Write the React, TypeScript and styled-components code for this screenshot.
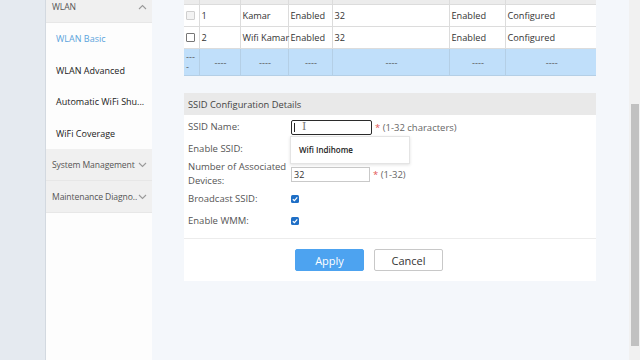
import React from "react";
import styled, { createGlobalStyle } from "styled-components";

const GlobalStyle = createGlobalStyle`
   body {
      margin: 0;
      font-family: "Open Sans", "Noto Sans", sans-serif;
      color: #333;
   }
`;

const Chevron = ({ up }: { up?: boolean }) => (
   <svg width="9" height="6" viewBox="0 0 9 6">
      <path
         d={up ? "M1 5 L4.5 1.5 L8 5" : "M1 1 L4.5 4.5 L8 1"}
         fill="none"
         stroke="#9a9a9a"
         strokeWidth="1.1"
      />
   </svg>
);

const Tick = () => (
   <svg width="8" height="8" viewBox="0 0 8 8">
      <rect width="8" height="8" rx="1.5" fill="#1f6fc6" />
      <path d="M1.8 4.2 L3.4 5.7 L6.3 2.4" fill="none" stroke="#fff" strokeWidth="1.2" />
   </svg>
);

const columns = [15, 41, 48, 44, 117, 56, 91];

const rows = [
   { box: "disabled", cells: ["1", "Kamar", "Enabled", "32", "Enabled", "Configured"] },
   { box: "plain", cells: ["2", "Wifi Kamar", "Enabled", "32", "Enabled", "Configured"] },
];

export default function App() {
   return (
      <>
         <GlobalStyle />
         <Page>
            <LeftStrip />
            <Sidebar>
               <Scroller>
                  <MenuHeader>
                     <span>WLAN</span> <Chevron up />
                  </MenuHeader>
                  <MenuItem active>WLAN Basic</MenuItem>
                  <MenuItem>WLAN Advanced</MenuItem>
                  <MenuItem>Automatic WiFi Shu...</MenuItem>
                  <MenuItem>WiFi Coverage</MenuItem>
                  <MenuHeader>
                     <span>System Management</span> <Chevron />
                  </MenuHeader>
                  <MenuHeader>
                     <span>Maintenance Diagno..</span> <Chevron />
                  </MenuHeader>
               </Scroller>
            </Sidebar>
            <Main>
               <Content>
                  <Table>
                     <colgroup>
                        {columns.map((w, i) => (
                           <col key={i} style={{ width: w }} />
                        ))}
                     </colgroup>
                     <tbody>
                        <HeadRow>
                           {columns.map((_, i) => (
                              <td key={i} />
                           ))}
                        </HeadRow>
                        {rows.map((r, i) => (
                           <tr key={i}>
                              <td>
                                 <Box faded={r.box === "disabled"} />
                              </td>
                              {r.cells.map((c, j) => (
                                 <td key={j}>{c}</td>
                              ))}
                           </tr>
                        ))}
                        <BlankRow>
                           <NarrowCell>----</NarrowCell>
                           {Array.from({ length: 6 }).map((_, j) => (
                              <td key={j}>----</td>
                           ))}
                        </BlankRow>
                     </tbody>
                  </Table>

                  <Panel>
                     <PanelTitle>SSID Configuration Details</PanelTitle>
                     <PanelBody>
                        <FieldRow>
                           <Label>SSID Name:</Label>
                           <Control>
                              <InputWrap>
                                 <TextBox focused>
                                    <Caret />
                                    <Beam>I</Beam>
                                 </TextBox>
                                 <Suggest>Wifi Indihome</Suggest>
                              </InputWrap>
                              <Hint>
                                 <em>*</em> (1-32 characters)
                              </Hint>
                           </Control>
                        </FieldRow>
                        <FieldRow>
                           <Label>Enable SSID:</Label>
                        </FieldRow>
                        <FieldRow tall>
                           <Label>
                              Number of Associated
                              <br />
                              Devices:
                           </Label>
                           <Control>
                              <TextBox width={79}>32</TextBox>
                              <Hint>
                                 <em>*</em> (1-32)
                              </Hint>
                           </Control>
                        </FieldRow>
                        <FieldRow>
                           <Label>Broadcast SSID:</Label>
                           <Control>
                              <Tick />
                           </Control>
                        </FieldRow>
                        <FieldRow>
                           <Label>Enable WMM:</Label>
                           <Control>
                              <Tick />
                           </Control>
                        </FieldRow>
                     </PanelBody>
                     <ButtonBar>
                        <Button primary>Apply</Button>
                        <Button>Cancel</Button>
                     </ButtonBar>
                  </Panel>
               </Content>
            </Main>
            <ScrollTrack>
               <ScrollThumb />
            </ScrollTrack>
         </Page>
      </>
   );
}

const Page = styled.div`
   display: flex;
   width: 640px;
   height: 360px;
   overflow: hidden;
   background: #f4f7fb;
`;

const LeftStrip = styled.div`
   width: 45px;
   flex-shrink: 0;
   background: #e5eaf0;
   border-right: 1px solid #d3d9e0;
`;

const Sidebar = styled.div`
   width: 106px;
   flex-shrink: 0;
   background: #fdfdfd;
   overflow: hidden;
`;

const Scroller = styled.div`
   margin-top: -9px;
`;

const MenuHeader = styled.div`
   height: 32px;
   display: flex;
   align-items: center;
   justify-content: space-between;
   padding: 0 5px 0 6px;
   background: #f0f0f0;
   border-bottom: 1px solid #e7e7e7;
   font-size: 8.6px;
   letter-spacing: -0.1px;
   white-space: nowrap;
   color: #555;
   box-sizing: border-box;

   svg {
      flex-shrink: 0;
   }
`;

const MenuItem = styled.div<{ active?: boolean }>`
   height: 31.5px;
   display: flex;
   align-items: center;
   padding-left: 10px;
   font-size: 9px;
   white-space: nowrap;
   color: ${(p) => (p.active ? "#5ba3dc" : "#222")};
`;

const Main = styled.div`
   flex: 1;
   overflow: hidden;
   padding: 0 33px 0 32px;
`;

const Content = styled.div`
   margin-top: -18px;
`;

const Table = styled.table`
   width: 412px;
   table-layout: fixed;
   border-collapse: collapse;
   background: #fff;
   font-size: 9.2px;
   color: #333;

   td {
      height: 22px;
      padding: 0 0 0 2px;
      border: 1px solid #dcdcdc;
      border-top-color: #e6e6e6;
      white-space: nowrap;
      box-sizing: border-box;
   }
   td:first-child {
      padding: 0 1px 0 2px;
   }
   tr > td:first-child {
      border-left: none;
   }
   tr > td:last-child {
      border-right: none;
   }
`;

const HeadRow = styled.tr`
   background: #ececec;
`;

const BlankRow = styled.tr`
   background: #c0dffa;
   td {
      height: 27px;
      text-align: center;
      color: #555;
      border-color: #b4cfe6;
   }
`;

const NarrowCell = styled.td`
   && {
      white-space: normal;
      word-break: break-all;
      line-height: 10px;
      text-align: left;
   }
`;

const Box = styled.span<{ faded?: boolean }>`
   display: block;
   width: 7px;
   height: 7px;
   border: 1px solid ${(p) => (p.faded ? "#cfcfcf" : "#777")};
   border-radius: 1px;
   background: ${(p) => (p.faded ? "#f3f3f3" : "#fff")};
`;

const Panel = styled.div`
   margin-top: 17px;
   width: 412px;
   background: #fff;
`;

const PanelTitle = styled.div`
   height: 22px;
   display: flex;
   align-items: center;
   padding-left: 4px;
   background: #e9e9e9;
   font-size: 9.3px;
   color: #444;
`;

const PanelBody = styled.div`
   padding: 1px 0 6px;
   border-bottom: 1px solid #ececec;
`;

const FieldRow = styled.div<{ tall?: boolean }>`
   display: flex;
   align-items: center;
   min-height: ${(p) => (p.tall ? "28px" : "22px")};
`;

const Label = styled.div`
   width: 107px;
   padding-left: 4px;
   box-sizing: border-box;
   font-size: 9.5px;
   line-height: 14px;
   color: #555;
`;

const Control = styled.div`
   display: flex;
   align-items: center;
   gap: 3px;
`;

const InputWrap = styled.div`
   position: relative;
`;

const TextBox = styled.div<{ focused?: boolean; width?: number }>`
   position: relative;
   width: ${(p) => p.width ?? 81}px;
   height: 15px;
   box-sizing: border-box;
   border: 1px solid ${(p) => (p.focused ? "#2b2b2b" : "#c9c9c9")};
   border-radius: ${(p) => (p.focused ? "2px" : "0")};
   padding-left: 2px;
   font-size: 9px;
   line-height: 13px;
   color: #333;
`;

const Caret = styled.span`
   display: inline-block;
   width: 1px;
   height: 9px;
   margin-top: 2px;
   background: #222;
   vertical-align: top;
`;

const Beam = styled.span`
   position: absolute;
   left: 10px;
   top: 0;
   font-size: 11px;
   line-height: 12px;
   color: #777;
   font-family: "DejaVu Serif", serif;
`;

const Suggest = styled.div`
   position: absolute;
   left: -1px;
   top: 16px;
   width: 120px;
   height: 28px;
   display: flex;
   align-items: center;
   padding-left: 8px;
   box-sizing: border-box;
   background: #fff;
   border: 1px solid #e4e4e4;
   box-shadow: 0 1px 3px rgba(0, 0, 0, 0.12);
   font-size: 8px;
   font-weight: 600;
   color: #222;
   z-index: 2;
`;

const Hint = styled.span`
   font-size: 9.5px;
   color: #666;
   em {
      font-style: normal;
      color: #e25555;
   }
`;

const ButtonBar = styled.div`
   display: flex;
   gap: 10px;
   padding: 10px 0 10px 111px;
`;

const Button = styled.div<{ primary?: boolean }>`
   width: 69px;
   height: 22px;
   display: flex;
   align-items: center;
   justify-content: center;
   box-sizing: border-box;
   border-radius: 2px;
   font-size: 11px;
   background: ${(p) => (p.primary ? "#4da3f0" : "#fff")};
   color: ${(p) => (p.primary ? "#fff" : "#333")};
   border: 1px solid ${(p) => (p.primary ? "#4da3f0" : "#c8c8c8")};
`;

const ScrollTrack = styled.div`
   width: 11px;
   flex-shrink: 0;
   background: #f1f1f1;
   padding-top: 104px;
   box-sizing: border-box;
   display: flex;
   justify-content: center;
`;

const ScrollThumb = styled.div`
   width: 8px;
   height: 242px;
   background: #c1c1c1;
`;
